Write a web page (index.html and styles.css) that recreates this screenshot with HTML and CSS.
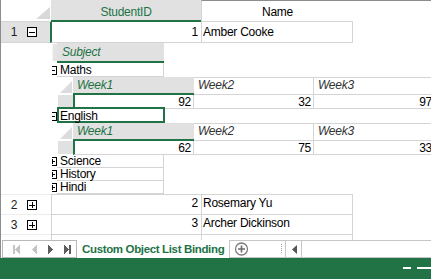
FILE: index.html
```html
<!DOCTYPE html>
<html>
<head>
<meta charset="utf-8">
<link rel="stylesheet" href="styles.css">
</head>
<body>
<div class="app">
  <div class="main">
    <div class="grid">
      <div class="hrow">
        <div class="corner"><svg width="14" height="12" viewBox="0 0 14 12"><polygon points="0,12 14,12 14,0" fill="#d9d9d9"/></svg></div>
        <div class="hc hc-sel">StudentID</div>
        <div class="hc hc-name">Name</div>
        <div class="hc-fill"></div>
      </div>

      <div class="row row-sel">
        <div class="rh rh-sel"><span class="rn">1</span><svg class="bx" width="10" height="10" viewBox="0 0 10 10" shape-rendering="crispEdges"><rect x="0.5" y="0.5" width="9" height="9" fill="#fff" stroke="#000"/><path d="M2 5.5h6" stroke="#000"/></svg></div>
        <div class="cell c1 cell-sel num">1</div>
        <div class="cell c2">Amber Cooke</div>
      </div>

      <div class="detail">
        <div class="sh">
          <div class="sh-corner"></div>
          <div class="sh-h">Subject</div>
        </div>

        <div class="sr">
          <div class="sx"><svg width="9" height="9" viewBox="0 0 9 9" shape-rendering="crispEdges"><rect x="0.5" y="0.5" width="8" height="8" fill="#fff" stroke="#000"/><path d="M2 4.5h5" stroke="#000"/></svg></div>
          <div class="sc">Maths</div>
        </div>

        <div class="wk">
          <div class="wh">
            <div class="wcorner"><svg width="12" height="12" viewBox="0 0 12 12"><polygon points="0,12 12,12 12,0" fill="#dcdcdc"/></svg></div>
            <div class="whc wh1">Week1</div>
            <div class="whc wh2">Week2</div>
            <div class="whc wh3">Week3</div>
          </div>
          <div class="wr">
            <div class="wrh"></div>
            <div class="wd wd1">92</div>
            <div class="wd wd2">32</div>
            <div class="wd wd3">97</div>
          </div>
        </div>

        <div class="sr">
          <div class="sx"><svg width="9" height="9" viewBox="0 0 9 9" shape-rendering="crispEdges"><rect x="0.5" y="0.5" width="8" height="8" fill="#fff" stroke="#000"/><path d="M2 4.5h5" stroke="#000"/></svg></div>
          <div class="sc sc-sel">English</div>
        </div>

        <div class="wk">
          <div class="wh">
            <div class="wcorner"><svg width="12" height="12" viewBox="0 0 12 12"><polygon points="0,12 12,12 12,0" fill="#dcdcdc"/></svg></div>
            <div class="whc wh1">Week1</div>
            <div class="whc wh2">Week2</div>
            <div class="whc wh3">Week3</div>
          </div>
          <div class="wr">
            <div class="wrh"></div>
            <div class="wd wd1">62</div>
            <div class="wd wd2">75</div>
            <div class="wd wd3">33</div>
          </div>
        </div>

        <div class="sr sr-s">
          <div class="sx"><svg width="9" height="9" viewBox="0 0 9 9" shape-rendering="crispEdges"><rect x="0.5" y="0.5" width="8" height="8" fill="#fff" stroke="#000"/><path d="M2 4.5h5M4.5 2v5" stroke="#000"/></svg></div>
          <div class="sc">Science</div>
        </div>
        <div class="sr sr-s">
          <div class="sx"><svg width="9" height="9" viewBox="0 0 9 9" shape-rendering="crispEdges"><rect x="0.5" y="0.5" width="8" height="8" fill="#fff" stroke="#000"/><path d="M2 4.5h5M4.5 2v5" stroke="#000"/></svg></div>
          <div class="sc">History</div>
        </div>
        <div class="sr sr-s">
          <div class="sx"><svg width="9" height="9" viewBox="0 0 9 9" shape-rendering="crispEdges"><rect x="0.5" y="0.5" width="8" height="8" fill="#fff" stroke="#000"/><path d="M2 4.5h5M4.5 2v5" stroke="#000"/></svg></div>
          <div class="sc">Hindi</div>
        </div>
      </div>

      <div class="row">
        <div class="rh"><span class="rn">2</span><svg class="bx" width="10" height="10" viewBox="0 0 10 10" shape-rendering="crispEdges"><rect x="0.5" y="0.5" width="9" height="9" fill="#fff" stroke="#000"/><path d="M2 5.5h6M5.5 2v6" stroke="#000"/></svg></div>
        <div class="cell c1 num">2</div>
        <div class="cell c2">Rosemary Yu</div>
      </div>
      <div class="row">
        <div class="rh"><span class="rn">3</span><svg class="bx" width="10" height="10" viewBox="0 0 10 10" shape-rendering="crispEdges"><rect x="0.5" y="0.5" width="9" height="9" fill="#fff" stroke="#000"/><path d="M2 5.5h6M5.5 2v6" stroke="#000"/></svg></div>
        <div class="cell c1 num">3</div>
        <div class="cell c2">Archer Dickinson</div>
      </div>
      <div class="row">
        <div class="rh"></div>
        <div class="cell c1"></div>
        <div class="cell c2"></div>
      </div>
    </div>

    <div class="tabbar">
      <div class="nav">
        <svg width="73" height="16" viewBox="0 0 73 16" shape-rendering="crispEdges">
          <rect x="10" y="4" width="2" height="9" fill="#c4c4c4"/>
          <polygon points="12,8.5 17,4 17,13" fill="#c4c4c4"/>
          <polygon points="29,8.5 34,4 34,13" fill="#c4c4c4"/>
          <polygon points="45,4 50,8.5 45,13" fill="#5e5e5e"/>
          <polygon points="61,4 66,8.5 61,13" fill="#5e5e5e"/>
          <rect x="66" y="4" width="2" height="9" fill="#5e5e5e"/>
        </svg>
      </div>
      <div class="tab">Custom Object List Binding</div>
      <div class="add">
        <svg width="55" height="16" viewBox="0 0 55 16">
          <circle cx="11.5" cy="8" r="6" fill="none" stroke="#7d7d7d" stroke-width="1.3"/>
          <path d="M11.5 4.5v7M8 8h7" stroke="#6a6a6a" stroke-width="1.6"/>
          <rect x="51" y="3" width="1" height="1" fill="#a0a0a0"/>
          <rect x="51" y="5" width="1" height="1" fill="#a0a0a0"/>
          <rect x="51" y="7" width="1" height="1" fill="#a0a0a0"/>
          <rect x="51" y="9" width="1" height="1" fill="#a0a0a0"/>
          <rect x="51" y="11" width="1" height="1" fill="#a0a0a0"/>
        </svg>
      </div>
      <div class="sbtn">
        <svg width="16" height="16" viewBox="0 0 16 16"><polygon points="6,8.5 11,4 11,13" fill="#555"/></svg>
      </div>
      <div class="track"></div>
    </div>
  </div>
  <div class="status">
    <span class="dash d1"></span>
    <span class="dash d2"></span>
  </div>
</div>
</body>
</html>
```

FILE: styles.css
```css
* { box-sizing: border-box; }
html, body { margin: 0; padding: 0; background: #fff; }
body {
  font-family: "Liberation Sans", Arial, sans-serif;
  font-size: 12px;
  letter-spacing: -0.25px;
  color: #000;
}
svg { display: block; }

.app {
  width: 431px;
  height: 279px;
  display: flex;
  flex-direction: column;
  overflow: hidden;
}
.main {
  height: 258px;
  flex: none;
  border-left: 1px solid #8c8c8c;
  display: flex;
  flex-direction: column;
}
.grid {
  height: 240px;
  flex: none;
  overflow: hidden;
  display: flex;
  flex-direction: column;
}

/* column headers */
.hrow { display: flex; height: 22px; flex: none; }
.corner {
  width: 50px;
  flex: none;
  border-bottom: 1px solid #d4d4d4;
  display: flex;
  justify-content: flex-end;
  padding: 7px 1px 0 0;
}
.hc { flex: none; text-align: center; line-height: 16px; white-space: nowrap; }
.hc-sel {
  width: 150px;
  background: #e1e1e1;
  color: #217346;
  border-bottom: 2px solid #217346;
  padding-top: 4px;
}
.hc-name {
  width: 152px;
  border-top: 1px solid #8c8c8c;
  border-left: 1px solid #d4d4d4;
  border-bottom: 1px solid #d4d4d4;
  padding-top: 3px;
}
.hc-fill { flex: 1; border-top: 1px solid #8c8c8c; }

/* top-level rows */
.row { display: flex; height: 20px; flex: none; }
.row-sel { height: 21px; }
.rh {
  width: 50px;
  flex: none;
  display: flex;
  align-items: center;
  padding-left: 8px;
  border-top: 1px solid #ececec;
}
.rh-sel {
  width: 49px;
  background: #e1e1e1;
  border-top: 0;
  border-bottom: 1px solid #d4d4d4;
}
.rn { width: 10px; text-align: center; color: #222; }
.bx { margin-left: 8px; }
.cell {
  flex: none;
  line-height: 16px;
  white-space: nowrap;
  overflow: hidden;
  border-top: 1px solid #d4d4d4;
  border-right: 1px solid #d4d4d4;
}
.c1 { width: 151px; border-left: 1px solid #d4d4d4; }
.c2 { width: 151px; padding-left: 1px; }
.num { text-align: right; padding-right: 3px; }
.row-sel .cell { border-top: 0; border-bottom: 1px solid #d4d4d4; padding-top: 2px; }
.cell-sel { width: 152px; border-left: 2px solid #217346; }

/* detail area */
.detail {
  height: 151px;
  flex: none;
  overflow: hidden;
  padding-left: 51px;
  display: flex;
  flex-direction: column;
}
.sh { display: flex; height: 20px; flex: none; }
.sh-corner { width: 5px; height: 17px; margin-top: 1px; background: #e4e4e4; border-left: 1px solid #f4f4f4; }
.sh-h {
  width: 107px;
  background: #e1e1e1;
  border-bottom: 2px solid #217346;
  color: #217346;
  font-style: italic;
  line-height: 16px;
  padding: 1px 0 0 5px;
}
.sr { display: flex; height: 14px; flex: none; }
.sr-s { height: 13px; }
.sx {
  width: 5px;
  flex: none;
  overflow: hidden;
  display: flex;
  align-items: center;
}
.sx svg { margin-left: -4px; flex: none; }
.sc {
  width: 107px;
  flex: none;
  border-right: 1px solid #d4d4d4;
  border-bottom: 1px solid #d4d4d4;
  padding: 1px 0 0 3px;
  line-height: 12px;
  white-space: nowrap;
}
.sr-s .sc { padding-top: 0; line-height: 13px; }
.sc-sel {
  width: 108px;
  height: 16px;
  margin-top: -2px;
  border: 2px solid #217346;
  padding: 1px 0 0 1px;
  line-height: 12px;
}

/* week sub-grid */
.wk { margin-left: 6px; display: flex; flex-direction: column; flex: none; }
.wh { display: flex; height: 18px; }
.wcorner {
  width: 15px;
  flex: none;
  display: flex;
  justify-content: flex-end;
  align-items: flex-end;
  padding: 0 1px 2px 0;
}
.whc {
  flex: none;
  font-style: italic;
  line-height: 16px;
  padding-left: 4px;
  white-space: nowrap;
  color: #333;
}
.wh1 {
  width: 121px;
  background: #e1e1e1;
  color: #217346;
  border-bottom: 2px solid #217346;
}
.wh2 {
  width: 120px;
  border-top: 1px solid #d4d4d4;
  border-right: 1px solid #d4d4d4;
  border-bottom: 1px solid #d4d4d4;
  line-height: 15px;
}
.wh3 {
  width: 120px;
  border-top: 1px solid #d4d4d4;
  border-bottom: 1px solid #d4d4d4;
  line-height: 15px;
}
.wr { display: flex; height: 14px; }
.wrh { width: 15px; flex: none; height: 13px; background: #e1e1e1; }
.wd {
  flex: none;
  text-align: right;
  line-height: 12px;
  padding-top: 1px;
  border-bottom: 1px solid #d4d4d4;
  border-right: 1px solid #d4d4d4;
  padding-right: 2px;
}
.wd1 { width: 121px; border-left: 2px solid #217346; }
.wd2 { width: 120px; }
.wd3 { width: 120px; border-right: 0; padding-right: 2px; }

/* sheet tab bar */
.tabbar { height: 18px; flex: none; display: flex; }
.nav {
  width: 75px;
  margin-left: 1px;
  flex: none;
  border: 1px solid #b8b8b8;
}
.tab {
  width: 152px;
  flex: none;
  color: #217346;
  font-weight: bold;
  font-size: 11.5px;
  letter-spacing: -0.35px;
  padding: 1px 0 0 5px;
  line-height: 16px;
  white-space: nowrap;
}
.add {
  width: 56px;
  flex: none;
  border-left: 1px solid #c6c6c6;
  border-top: 1px solid #c6c6c6;
  border-bottom: 1px solid #c6c6c6;
}
.sbtn {
  width: 17px;
  flex: none;
  border-left: 1px solid #c6c6c6;
  border-right: 1px solid #c6c6c6;
  border-top: 1px solid #c6c6c6;
  border-bottom: 1px solid #c6c6c6;
}
.track {
  flex: 1;
  border-top: 1px solid #c6c6c6;
  border-bottom: 1px solid #c6c6c6;
}

/* status bar */
.status {
  height: 21px;
  flex: none;
  background: #217346;
  display: flex;
  justify-content: flex-end;
  align-items: flex-start;
  padding-top: 9px;
  gap: 6px;
}
.dash { height: 2px; background: #fff; display: block; }
.d1 { width: 8px; }
.d2 { width: 14px; }
```
